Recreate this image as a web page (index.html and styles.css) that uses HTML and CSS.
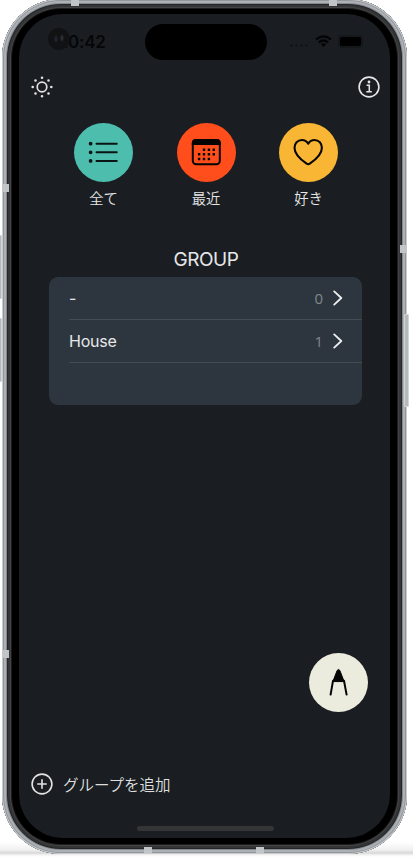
FILE: index.html
```html
<!DOCTYPE html>
<html lang="ja">
<head>
<meta charset="utf-8">
<title>GROUP</title>
<link rel="stylesheet" href="styles.css">
</head>
<body>
<div class="stage">
  <i class="side left-up"></i><i class="side left-down"></i><i class="side right-power"></i>
  <div class="phone">
    <main class="screen">
      <div class="status">
        <span class="time">10:42</span>
        <span class="island"></span>
        <span class="signals">
          <i class="dots"></i>
          <svg class="wifi" width="17" height="13" viewBox="0 0 17 13" fill="none" stroke="#030405" stroke-width="2.2"><path d="M1 4.5Q8.5-1.8 16 4.5M3.7 7.5q4.8-4 9.6 0"/><path d="M5.9 9.2q2.6-2 5.2 0L8.5 12z" fill="#030405" stroke="none"/></svg>
          <i class="battery"></i>
        </span>
        <i class="lens"></i>
      </div>
      <header class="tools">
        <svg width="22" height="22" viewBox="0 0 22 22" fill="none" stroke="#e2e2e3"><circle cx="11" cy="11" r="4.8" stroke-width="1.7"/><path stroke-width="2.6" stroke-linecap="round" d="M11 1.7v.01M11 20.3v.01M1.7 11h.01M20.3 11h.01M4.5 4.5h.01M17.5 4.5h.01M4.5 17.5h.01M17.5 17.5h.01"/></svg>
        <svg width="22" height="22" viewBox="0 0 22 22" fill="none" stroke="#e6e6e7"><circle cx="11" cy="11" r="9.9" stroke-width="1.6"/><path stroke-width="1.5" d="M8.6 9.3h2.7v6.2M8.3 15.8h5.5"/><circle cx="11" cy="6" r="1.4" fill="#e6e6e7" stroke="none"/></svg>
      </header>
      <nav class="filters">
        <div class="filter"><span class="disc teal"><svg width="59" height="59" viewBox="0 0 59 59" stroke="#0b1415" stroke-linecap="round" fill="none"><path stroke-width="2" d="M22.5 20.7h20.3M22.5 29.3h20.3M22.5 37.9h20.3"/><path stroke-width="3.8" d="M16.6 20.7h.01M16.6 29.3h.01M16.6 37.9h.01"/></svg></span><span>全て</span></div>
        <div class="filter"><span class="disc red"><svg width="59" height="59" viewBox="0 0 59 59"><rect x="15.8" y="17" width="27" height="24.2" rx="3.5" fill="none" stroke="#050403" stroke-width="2"/><path fill="#050403" d="M14.8 22v-2a4 4 0 0 1 4-4h21a4 4 0 0 1 4 4v2z"/><path stroke="#050403" stroke-width="2.4" stroke-dasharray="2.4 2.5" d="M25.8 26.7h12.2M20.9 31.3h17.1M20.9 36h12.2"/></svg></span><span>最近</span></div>
        <div class="filter"><span class="disc yellow"><svg width="59" height="59" viewBox="0 0 59 59" fill="none" stroke="#080704" stroke-width="2.1" stroke-linejoin="round"><path d="M29.2 20.7C27.5 18 25.2 17 22.9 17c-4.4 0-7.4 3.4-7.4 7.8 0 6.1 5.5 11.4 12.1 15.9q1.6 1.1 3.2 0c6.6-4.5 12.1-9.8 12.1-15.9 0-4.4-3-7.8-7.4-7.8-2.3 0-4.6 1-6.3 3.7z"/></svg></span><span>好き</span></div>
      </nav>
      <h1 class="title">GROUP</h1>
      <ul class="groups">
        <li><span class="name">-</span><span class="count">0</span><svg class="chevron" width="10" height="16" viewBox="0 0 10 16"><path d="M1.2 1.4 8.3 8l-7.1 6.6"/></svg></li>
        <li><span class="name">House</span><span class="count">1</span><svg class="chevron" width="10" height="16" viewBox="0 0 10 16"><path d="M1.2 1.4 8.3 8l-7.1 6.6"/></svg></li>
      </ul>
      <div class="compose"><svg width="59" height="59" viewBox="0 0 59 59" fill="none" stroke="#050505" stroke-width="2" stroke-linecap="round" stroke-linejoin="round"><path d="M21.6 41.6l2.4-13.8h11l2.6 13.8"/><path fill="#050505" stroke-width="1" d="M24 28.2l4.1-10.6q1.4-2.4 2.8 0L35 28.2z"/></svg></div>
      <footer class="add"><svg width="22" height="22" viewBox="0 0 22 22" fill="none" stroke="#e2e2e3" stroke-width="1.6" stroke-linecap="round"><circle cx="11" cy="11" r="9.9"/><path d="M11 6.8v8.4M6.8 11h8.4"/></svg><span>グループを追加</span></footer>
      <div class="home"></div>
    </main>
  </div>
  <i class="band b1"></i><i class="band b2"></i><i class="band b3"></i><i class="band b4"></i><i class="band b5"></i><i class="band b6"></i><i class="band b7"></i>
</div>
</body>
</html>
```
FILE: styles.css
```css
* { box-sizing: border-box; }
body { margin: 0; background: #fff; font-family: Inter, "Noto Sans CJK JP", sans-serif; color: #e7e7e8; }
.stage {
  position: relative;
  width: 413px;
  height: 860px;
  overflow: hidden;
  background: linear-gradient(#fff 842px, #f0f0f0 850px, #d8d8d8 853px, #f4f4f4 855px, #fff 857px);
}
.phone {
  width: 405px;
  height: 855px;
  margin: -1px 0 0 2px;
  padding: 15px 17px 16px;
  border-radius: 59px;
  background: #000;
  box-shadow: inset 0 0 0 1px #c9cccf, inset 0 0 0 2px #92979c, inset 0 0 0 4px #adb1b6, inset 0 0 0 5px #85898e, inset 0 0 0 6px #242628, inset 0 0 0 8px #343536, inset 0 0 0 9px #444, inset 0 0 0 10px #1c1c1c;
}
.screen {
  display: flex;
  flex-direction: column;
  width: 371px;
  height: 824px;
  border-radius: 44px;
  background: #1a1e22;
  overflow: hidden;
}
.status { position: relative; display: flex; height: 62px; flex: none; padding-top: 10px; }
.time { width: 126px; padding: 8px 0 0 42px; color: #050607; font-size: 17px; line-height: 20px; font-weight: 600; letter-spacing: -.2px; }
.island { width: 122px; height: 36px; border-radius: 18px; background: #000; }
.signals { display: flex; align-items: center; height: 35px; padding-left: 22px; }
.dots { width: 20px; height: 3px; margin: 8px 6px 0 0; background: radial-gradient(circle, #121518 1px, transparent 1.6px) 0 0 / 5px 3px; }
.battery { width: 25px; height: 13px; margin-left: 6px; border: 2px solid #15181b; border-radius: 4px; background: #000; }
.lens { position: absolute; left: 29px; top: 14px; width: 22px; height: 22px; border-radius: 50%; background: radial-gradient(ellipse 2px 4px at 8px 11px, #202431 50%, transparent), radial-gradient(ellipse 2px 4px at 14px 10px, #2c2d31 50%, transparent), #101213; }
.tools { display: flex; justify-content: space-between; height: 47px; flex: none; padding: 0 10px 0 12px; }
.filters { display: flex; justify-content: space-between; height: 124px; flex: none; padding: 0 52px 0 55px; }
.filter { display: flex; flex-direction: column; align-items: center; width: 59px; font-size: 14.3px; line-height: 20px; font-family: "Noto Sans CJK JP", sans-serif; font-weight: 350; }
.disc { width: 59px; height: 59px; margin-bottom: 6px; border-radius: 50%; }
.disc svg, .compose svg { display: block; }
.teal { background: #4dbeae; }
.red { background: #ff4d1c; }
.yellow { background: #f9b634; }
.title { height: 30px; flex: none; margin: 0; padding-left: 3px; text-align: center; font-size: 19px; line-height: 26px; font-weight: 400; letter-spacing: -.4px; }
.groups { width: 313px; height: 128px; flex: none; margin: 0 0 0 30px; padding: 0 0 0 20px; border-radius: 9px; background: #2d363f; list-style: none; }
.groups li { display: flex; align-items: center; height: 43px; padding-right: 19px; border-bottom: 1px solid #434b53; font-size: 16px; }
.name { flex: 1; letter-spacing: -.2px; }
.count { margin-right: 10px; color: #81868c; font-family: "Open Sans", sans-serif; font-size: 15px; }
.chevron { fill: none; stroke: #eeeeef; stroke-width: 1.8; stroke-linecap: round; stroke-linejoin: round; }
.compose { width: 59px; height: 59px; flex: none; margin: 248px 0 0 290px; border-radius: 50%; background: #ebecdd; }
.add { display: flex; align-items: center; height: 24px; flex: none; margin: 60px 0 0 12px; gap: 10px; font: 350 15.5px/24px "Noto Sans CJK JP", sans-serif; color: #dededf; }
.home { width: 137px; height: 5px; flex: none; margin: 30px 0 0 118px; border-radius: 3px; background: #343536; }
.side { position: absolute; background: #b4b9bc; border: 1px solid #d2d4d6; border-radius: 1px; }
.left-up { left: -3px; top: 235px; width: 5px; height: 64px; }
.left-down { left: -3px; top: 318px; width: 5px; height: 64px; }
.right-power { left: 404px; top: 314px; width: 5px; height: 93px; }
.band { position: absolute; width: 8px; height: 6px; background: #c2c5c7; }
.b1 { left: 71px; top: 0; }
.b2 { left: 329px; top: 0; }
.b3 { left: 144px; top: 847px; }
.b4 { left: 256px; top: 847px; }
.b5 { left: 2px; top: 184px; width: 7px; height: 8px; }
.b6 { left: 400px; top: 245px; width: 7px; height: 8px; }
.b7 { left: 2px; top: 650px; width: 7px; height: 8px; }
```
